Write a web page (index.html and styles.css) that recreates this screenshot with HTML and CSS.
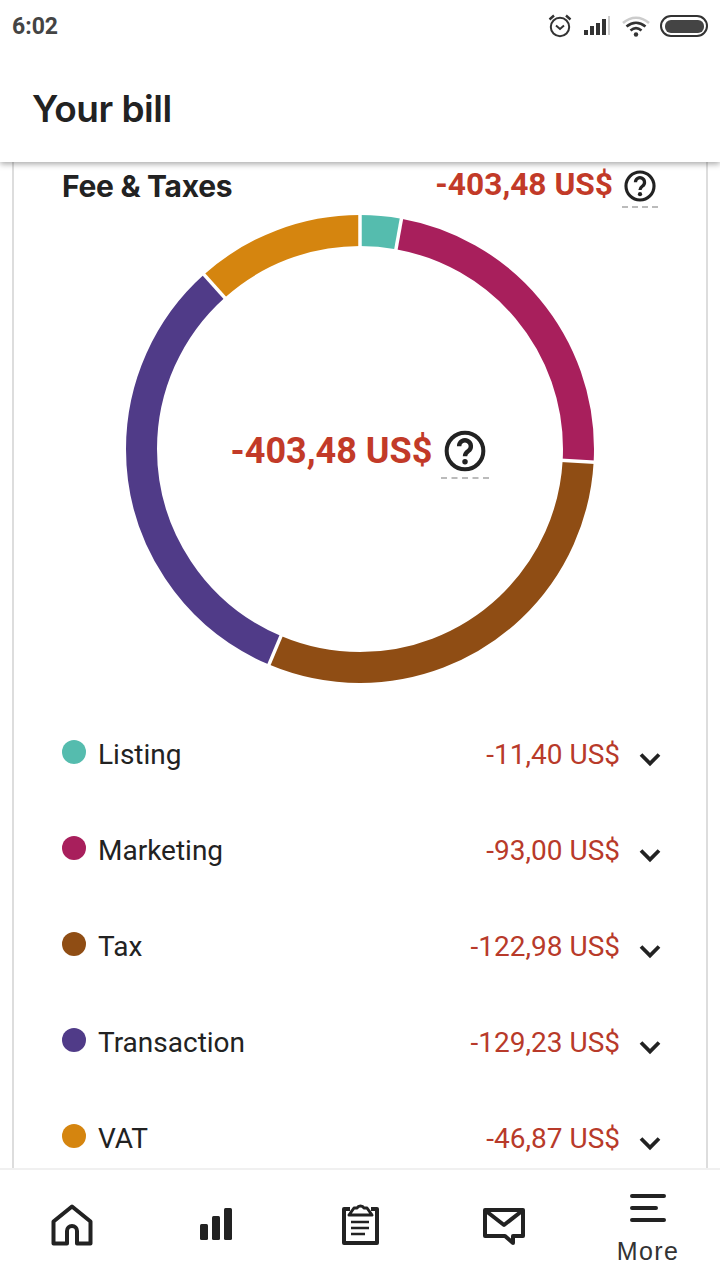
FILE: index.html
```html
<!DOCTYPE html>
<html lang="en">
<head>
<meta charset="utf-8">
<title>Your bill</title>
<link rel="stylesheet" href="styles.css">
</head>
<body>
<div class="app">
  <div class="status">
    <span class="time">6:02</span>
    <div class="status-icons">
      <svg class="si-alarm" width="26" height="26" viewBox="0 0 26 26" fill="none" stroke="#333" stroke-width="2"><circle cx="13" cy="14" r="9.2"/><path d="M9 12.5l4 3.5 4-3.5"/><path d="M2.5 6.5L7 2.5M23.5 6.5L19 2.5" stroke-width="2.4"/></svg>
      <svg class="si-signal" width="28" height="22" viewBox="0 0 28 22"><path fill="#333" d="M1 15h4v5H1zM7 11h4v9H7zM13 8h4v12h-4zM19 4h4v16h-4z"/><path fill="#ccc" d="M25 1h2v19h-2z"/></svg>
      <svg class="si-wifi" width="30" height="24" viewBox="0 0 30 24" fill="none" stroke-width="2.6"><path stroke="#ccc" d="M2 9c8-7 18-7 26 0"/><path stroke="#333" d="M5.500 12.500c6-5 13-5 19 0M9.500 16.500c3.500-3 7.500-3 11 0"/><circle cx="15" cy="20.500" r="2.200" fill="#333"/></svg>
      <div class="si-battery"><div class="si-battery-fill"></div></div>
    </div>
  </div>
  <header class="topbar"><h1 class="title">Your bill</h1></header>
  <main class="content">
    <section class="card">
      <div class="fee-row">
        <h2 class="fee-title">Fee &amp; Taxes</h2>
        <div class="fee-total">
          <span class="amount-strong small">-403,48 US$</span>
          <span class="help help-small">
            <svg viewBox="0 0 24 24" width="34" height="34" fill="none"><circle cx="12" cy="12" r="9.900" stroke="#222" stroke-width="2.200"/><path d="M8.800 9.400a3.200 3.200 0 1 1 5 2.600c-1.200.9-1.800 1.400-1.800 2.800" stroke="#222" stroke-width="2.300"/><circle cx="12" cy="17.800" r="1.500" fill="#222"/></svg>
          </span>
        </div>
      </div>
      <div class="donut-wrap">
        <svg class="donut" width="470" height="470" viewBox="0 0 470 470" fill="none" stroke-width="31">
          <g transform="rotate(-90 235 235)">
            <circle cx="235" cy="235" r="218.500" pathLength="360" stroke="#55bcae" stroke-dasharray="10.200 349.800"/>
            <circle cx="235" cy="235" r="218.500" pathLength="360" stroke="#a81f5c" stroke-dasharray="83 277" stroke-dashoffset="-10.200"/>
            <circle cx="235" cy="235" r="218.500" pathLength="360" stroke="#8f4d14" stroke-dasharray="109.700 250.300" stroke-dashoffset="-93.200"/>
            <circle cx="235" cy="235" r="218.500" pathLength="360" stroke="#503b88" stroke-dasharray="115.300 244.700" stroke-dashoffset="-202.900"/>
            <circle cx="235" cy="235" r="218.500" pathLength="360" stroke="#d5850f" stroke-dasharray="41.800 318.200" stroke-dashoffset="-318.200"/>
            <g stroke="#fff" stroke-width="3.500">
              <path d="M235 235m201 0h36" transform="rotate(0 235 235)"/>
              <path d="M235 235m201 0h36" transform="rotate(10.200 235 235)"/>
              <path d="M235 235m201 0h36" transform="rotate(93.200 235 235)"/>
              <path d="M235 235m201 0h36" transform="rotate(202.900 235 235)"/>
              <path d="M235 235m201 0h36" transform="rotate(318.200 235 235)"/>
            </g>
          </g>
        </svg>
        <div class="donut-center">
          <span class="amount-strong big">-403,48 US$</span>
          <span class="help help-big">
            <svg viewBox="0 0 24 24" width="44" height="44" fill="none"><circle cx="12" cy="12" r="10" stroke="#222" stroke-width="2.200"/><path d="M8.800 9.400a3.200 3.200 0 1 1 5 2.600c-1.200.9-1.800 1.400-1.800 2.800" stroke="#222" stroke-width="2.400"/><circle cx="12" cy="17.800" r="1.500" fill="#222"/></svg>
          </span>
        </div>
      </div>
      <ul class="legend">
        <li class="row"><span class="dot teal"></span><span class="label">Listing</span><span class="value">-11,40 US$</span><svg class="chev" width="24" height="16" viewBox="0 0 24 16" fill="none"><path d="M3 3.500l9 9 9-9" stroke="#222" stroke-width="3.800"/></svg></li>
        <li class="row"><span class="dot magenta"></span><span class="label">Marketing</span><span class="value">-93,00 US$</span><svg class="chev" width="24" height="16" viewBox="0 0 24 16" fill="none"><path d="M3 3.500l9 9 9-9" stroke="#222" stroke-width="3.800"/></svg></li>
        <li class="row"><span class="dot brown"></span><span class="label">Tax</span><span class="value">-122,98 US$</span><svg class="chev" width="24" height="16" viewBox="0 0 24 16" fill="none"><path d="M3 3.500l9 9 9-9" stroke="#222" stroke-width="3.800"/></svg></li>
        <li class="row"><span class="dot purple"></span><span class="label">Transaction</span><span class="value">-129,23 US$</span><svg class="chev" width="24" height="16" viewBox="0 0 24 16" fill="none"><path d="M3 3.500l9 9 9-9" stroke="#222" stroke-width="3.800"/></svg></li>
        <li class="row"><span class="dot orange"></span><span class="label">VAT</span><span class="value">-46,87 US$</span><svg class="chev" width="24" height="16" viewBox="0 0 24 16" fill="none"><path d="M3 3.500l9 9 9-9" stroke="#222" stroke-width="3.800"/></svg></li>
      </ul>
    </section>
  </main>
  <nav class="tabs">
    <div class="tab tab-home">
      <svg width="42" height="42" viewBox="0 0 42 42" fill="none" stroke="#222" stroke-width="4" stroke-linejoin="round"><path d="M2.500 17.500L21 2.500l18.500 15V39.500H26V27a5 5 0 0 0-10 0v12.500H2.500z"/></svg>
    </div>
    <div class="tab tab-bars">
      <svg width="32" height="32" viewBox="0 0 32 32" fill="#222"><rect x="0" y="16" width="8" height="16" rx="1.500"/><rect x="12" y="8" width="8" height="24" rx="1.500"/><rect x="24" y="0" width="8" height="32" rx="1.500"/></svg>
    </div>
    <div class="tab tab-clip">
      <svg width="38" height="46" viewBox="0 0 38 46" fill="none" stroke="#222" stroke-linejoin="round"><path d="M9 9H3v34h33V9h-6" stroke-width="4"/><path d="M8 15l5-7h3a4 4 0 0 1 7 0h3l5 7z" stroke-width="3"/><path d="M10 22h18M10 28h18M10 34h14" stroke-width="2.400"/></svg>
    </div>
    <div class="tab tab-mail">
      <svg width="42" height="38" viewBox="0 0 42 38" fill="none" stroke="#222" stroke-width="4" stroke-linejoin="round"><path d="M2 2h38v26H30v7l-8-7H2z"/><path d="M3 3l18 14L39 3"/></svg>
    </div>
    <div class="tab tab-more">
      <svg width="38" height="32" viewBox="0 0 38 32" fill="none" stroke="#222" stroke-width="4" stroke-linecap="round"><path d="M3 4h32M3 16h24M3 28h32"/></svg>
      <span class="tab-label">More</span>
    </div>
  </nav>
</div>
</body>
</html>
```
FILE: styles.css
```css
* { box-sizing: border-box; }
html, body { margin: 0; padding: 0; }
body { background: #fff; font-family: Roboto, sans-serif; color: #222; }
.app { width: 720px; height: 1280px; display: flex; flex-direction: column; overflow: hidden; }

.status { height: 52px; flex: none; display: flex; align-items: center; justify-content: space-between; padding: 0 12px; background: #fff; position: relative; z-index: 3; }
.time { font-size: 23px; font-weight: 700; color: #444; }
.status-icons { display: flex; align-items: center; gap: 9px; }
.si-alarm { margin-right: 1px; margin-left: -2px; }
.si-signal { margin-right: 1px; }
.si-battery { width: 48px; height: 22px; border: 2.500px solid #333; border-radius: 11px; padding: 2.500px; }
.si-battery-fill { width: 100%; height: 100%; background: #444; border-radius: 6px; }

.topbar { height: 110px; flex: none; display: flex; align-items: center; padding: 3px 32px 0; background: #fff; box-shadow: 0 2px 6px rgba(0,0,0,.35); position: relative; z-index: 2; }
.title { margin: 0; font-family: Inter, sans-serif; font-size: 37px; font-weight: 600; color: #222; letter-spacing: -0.5px; }

.content { flex: 1; min-height: 0; overflow: hidden; padding: 0 12px; background: #fff; }
.card { border-left: 2px solid #ddd; border-right: 2px solid #ddd; height: 100%; padding: 0 51px 0 48px; }

.fee-row { display: flex; align-items: center; justify-content: space-between; height: 47px; }
.fee-title { margin: 0; font-family: Inter, sans-serif; font-size: 30px; font-weight: 700; color: #222; letter-spacing: -0.3px; }
.fee-total { display: flex; align-items: center; gap: 10px; margin-right: -2px; }
.amount-strong { font-weight: 700; color: #c23a28; }
.small { font-size: 31.700px; margin-top: -2px; }
.big { font-size: 36px; }
.help { display: flex; position: relative; }
.help::after { content: ""; position: absolute; left: 50%; transform: translateX(-50%); border-top: 2px dashed #bbb; }
.help-small::after { bottom: -5px; width: 36px; }
.help-big::after { bottom: -6px; width: 48px; }

.donut-wrap { position: relative; width: 470px; height: 470px; margin: 5px 0 0 63px; }
.donut { display: block; }
.donut-center { position: absolute; inset: 0; display: flex; align-items: center; justify-content: center; gap: 11px; padding: 4px 2px 0 0; }

.legend { list-style: none; margin: 22px 0 0; padding: 0; }
.row { height: 96px; display: flex; align-items: center; font-size: 28px; }
.dot { width: 24px; height: 24px; border-radius: 50%; margin-right: 12px; margin-top: -4px; flex: none; }
.teal { background: #55bcae; }
.magenta { background: #a81f5c; }
.brown { background: #8f4d14; }
.purple { background: #503b88; }
.orange { background: #d5850f; }
.label { flex: 1; color: #222; }
.value { color: #b83a2a; }
.chev { margin-left: 18px; margin-right: -7px; margin-top: 10px; flex: none; }

.tabs { height: 112px; flex: none; display: grid; grid-template-columns: repeat(5, 144px); background: #fff; border-top: 2px solid #f0f0f0; position: relative; z-index: 2; }
.tab { display: flex; flex-direction: column; align-items: center; justify-content: flex-start; }
.tab-home { padding-top: 34px; }
.tab-bars { padding-top: 38px; }
.tab-clip { padding-top: 30px; }
.tab-mail { padding-top: 38px; }
.tab-more { padding-top: 22px; gap: 13px; }
.tab-label { font-size: 25px; letter-spacing: 1.400px; color: #333; font-family: "Liberation Sans", sans-serif; }
```
